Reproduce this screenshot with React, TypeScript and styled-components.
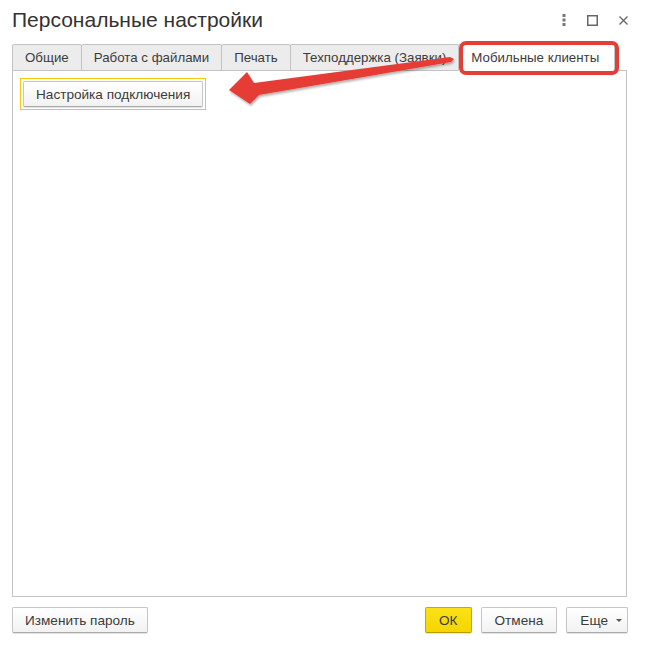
import React from "react";
import styled, { createGlobalStyle } from "styled-components";

interface ITabProps {
  $active?: boolean;
}

interface IButtonProps {
  $primary?: boolean;
  $pad?: number;
}

const GlobalStyle = createGlobalStyle`
  html, body {
    margin: 0;
    padding: 0;
    background: #fff;
  }
  * {
    box-sizing: border-box;
  }
`;

const Window = styled.div`
  position: relative;
  width: 647px;
  height: 646px;
  padding: 0 20px 13px 12px;
  display: flex;
  flex-direction: column;
  background: #fff;
  font-family: "Liberation Sans", Arial, sans-serif;
  color: #404040;
`;

const Header = styled.div`
  height: 44px;
  display: flex;
  align-items: flex-start;
  justify-content: space-between;
  padding-top: 8px;
`;

const Title = styled.h1`
  margin: 0;
  font-size: 21px;
  line-height: 24px;
  font-weight: normal;
  color: #333;
`;

const WindowControls = styled.div`
  display: flex;
  align-items: center;
  margin-top: 6px;
  margin-right: -1px;

  svg {
    display: block;
  }
`;

const ControlBtn = styled.div`
  height: 12px;
  display: flex;
  align-items: center;
  margin-left: 21px;
  cursor: pointer;

  &:first-child {
    margin-left: 0;
  }
`;

const TabBar = styled.div`
  display: flex;
  height: 27px;
  position: relative;
  z-index: 1;
`;

const Tab = styled.div<ITabProps>`
  height: 27px;
  padding: ${(p) => (p.$active ? "0 15px 0 12px" : "0 12px")};
  display: flex;
  align-items: center;
  font-size: 13.3px;
  color: #3c3c3c;
  white-space: nowrap;
  background: ${(p) => (p.$active ? "#fff" : "#ececec")};
  border: 1px solid #c3c3c3;
  border-bottom: ${(p) => (p.$active ? "1px solid #fff" : "1px solid #c3c3c3")};
  border-radius: 2px 2px 0 0;
  margin-left: -1px;
  cursor: pointer;

  &:first-child {
    margin-left: 0;
  }
`;

const Panel = styled.div`
  flex: 1;
  margin-top: -1px;
  border: 1px solid #c3c3c3;
  padding: 7px;
`;

const FocusFrame = styled.div`
  display: inline-block;
  border: 1px solid #f3c80e;
  padding: 2px;
`;

const Button = styled.button<IButtonProps>`
  height: 26px;
  padding: 0 ${(p) => p.$pad ?? 12}px;
  font-family: "Liberation Sans", Arial, sans-serif;
  font-size: 13.6px;
  color: #3c3c3c;
  background: ${(p) =>
    p.$primary
      ? "linear-gradient(#fbe116, #f4d600)"
      : "linear-gradient(#ffffff, #f2f2f2)"};
  border: 1px solid ${(p) => (p.$primary ? "#c7a900" : "#c6c6c6")};
  border-bottom-color: ${(p) => (p.$primary ? "#b89b00" : "#a9a9a9")};
  border-radius: 2px;
  box-shadow: 0 1px 1px rgba(0, 0, 0, 0.12);
  display: flex;
  align-items: center;
  gap: 8px;
  cursor: pointer;
`;

const MenuButton = styled(Button)`
  padding: 0 5px 0 13px;
`;

const Caret = styled.span`
  width: 0;
  height: 0;
  border-left: 3px solid transparent;
  border-right: 3px solid transparent;
  border-top: 3px solid #555;
  margin-top: 1px;
`;

const Footer = styled.div`
  display: flex;
  align-items: center;
  justify-content: space-between;
  margin-top: 10px;
  margin-right: -1px;
`;

const ButtonGroup = styled.div`
  display: flex;
  gap: 9px;
`;

const Highlight = styled.div`
  position: absolute;
  left: 459px;
  top: 41px;
  width: 160px;
  height: 34px;
  border: 4px solid #e53e34;
  border-radius: 7px;
  z-index: 2;
  pointer-events: none;
`;

const ArrowLayer = styled.svg`
  position: absolute;
  left: 0;
  top: 0;
  z-index: 3;
  pointer-events: none;
`;

function Dots() {
  return (
    <svg width="4" height="12" viewBox="0 0 4 12">
      <rect x="0.5" y="0" width="3" height="3" fill="#777" />
      <rect x="0.5" y="4.5" width="3" height="3" fill="#777" />
      <rect x="0.5" y="9" width="3" height="3" fill="#777" />
    </svg>
  );
}

function Maximize() {
  return (
    <svg width="11" height="11" viewBox="0 0 11 11">
      <rect x="0.75" y="0.75" width="9.5" height="9.5" fill="none" stroke="#666" strokeWidth="1.5" />
    </svg>
  );
}

function Close() {
  return (
    <svg width="9" height="9" viewBox="0 0 9 9">
      <path d="M0.5 0.5 L8.5 8.5 M8.5 0.5 L0.5 8.5" stroke="#666" strokeWidth="1.3" />
    </svg>
  );
}

const tabs = [
  "Общие",
  "Работа с файлами",
  "Печать",
  "Техподдержка (Заявки)",
  "Мобильные клиенты",
];

function App() {
  return (
    <Window>
      <GlobalStyle />
      <Header>
        <Title>Персональные настройки</Title>
        <WindowControls>
          <ControlBtn>
            <Dots />
          </ControlBtn>
          <ControlBtn>
            <Maximize />
          </ControlBtn>
          <ControlBtn>
            <Close />
          </ControlBtn>
        </WindowControls>
      </Header>
      <TabBar>
        {tabs.map((t, i) => (
          <Tab key={t} $active={i === tabs.length - 1}>
            {t}
          </Tab>
        ))}
      </TabBar>
      <Panel>
        <FocusFrame>
          <Button $pad={12}>Настройка подключения</Button>
        </FocusFrame>
      </Panel>
      <Footer>
        <Button $pad={12}>Изменить пароль</Button>
        <ButtonGroup>
          <Button $primary $pad={13}>ОК</Button>
          <Button $pad={13}>Отмена</Button>
          <MenuButton>
            Еще
            <Caret />
          </MenuButton>
        </ButtonGroup>
      </Footer>

      <Highlight />
      <ArrowLayer width="647" height="646" viewBox="0 0 647 646">
        <defs>
          <filter id="arrowShadow" x="-10%" y="-30%" width="120%" height="160%">
            <feDropShadow dx="1" dy="2" stdDeviation="1.2" floodColor="#000" floodOpacity="0.3" />
          </filter>
        </defs>
        <polygon
          points="229,90 247,72 254,83 450,57 454,59 451,62 259,95 250,104"
          fill="#e53e34"
          filter="url(#arrowShadow)"
        />
      </ArrowLayer>
    </Window>
  );
}

export default App;
